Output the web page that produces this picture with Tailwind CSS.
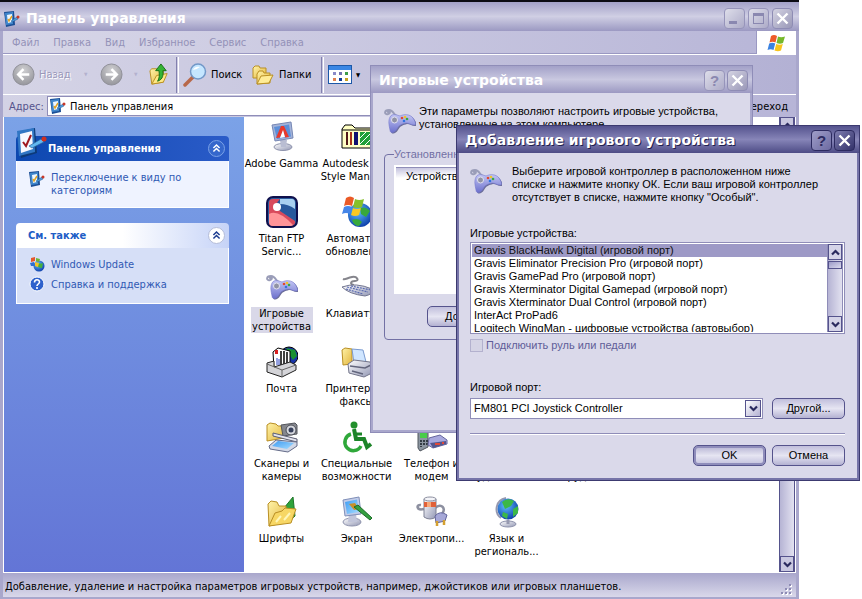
<!DOCTYPE html>
<html lang="ru">
<head>
  <meta charset="UTF-8" />
  <meta name="viewport" content="width=device-width, initial-scale=1.0" />
  <title>Панель управления</title>
  <script src="https://cdn.jsdelivr.net/npm/@tailwindcss/browser@4"></script>
</head>
<body class="relative h-screen overflow-hidden bg-white font-['DejaVu_Sans_Condensed','Noto_Sans',sans-serif] text-[11px] leading-[13px] text-black">

  <!-- Shared icons -->
  <svg class="absolute size-0" aria-hidden="true">
    <linearGradient id="pad" x1="0" y1="0" x2="0" y2="1"><stop offset="0" stop-color="#c3c6f4" /><stop offset="1" stop-color="#6c70cc" /></linearGradient>
    <linearGradient id="fold" x1="0" y1="0" x2="1" y2="1"><stop offset="0" stop-color="#fff3a8" /><stop offset="1" stop-color="#e2b53e" /></linearGradient>
    <linearGradient id="metal" x1="0" y1="0" x2="1" y2="1"><stop offset="0" stop-color="#ffffff" /><stop offset="1" stop-color="#9297b4" /></linearGradient>
    <linearGradient id="screen" x1="0" y1="0" x2="1" y2="1"><stop offset="0" stop-color="#3d9bf2" /><stop offset="1" stop-color="#a6dcff" /></linearGradient>
    <radialGradient id="globe" cx=".4" cy=".35" r=".7"><stop offset="0" stop-color="#5fc0ff" /><stop offset="1" stop-color="#0b3aa8" /></radialGradient>
    <radialGradient id="grey" cx=".5" cy=".3" r=".7"><stop offset="0" stop-color="#cfcfd2" /><stop offset="1" stop-color="#96969c" /></radialGradient>
    <symbol id="gamepad" viewBox="0 0 32 32">
      <path d="M13 11C9 10 10 5 5 5C0 5 0 10 4 9C7 8 6 6 3 7" fill="none" stroke="#9a9db8" stroke-width="2" />
      <path d="M6 12C8 8 13 10 16 11C20 9 26 9 29 13C31 16 33 20 30 20C27 20 25 18 22 18C18 19 15 20 13 24C11 28 6 29 6 25C5 20 4 16 6 12Z" fill="#6a6c96" transform="translate(1 1)" />
      <path d="M6 12C8 8 13 10 16 11C20 9 26 9 29 13C31 16 33 20 30 20C27 20 25 18 22 18C18 19 15 20 13 24C11 28 6 29 6 25C5 20 4 16 6 12Z" fill="url(#pad)" stroke="#7477cc" stroke-width=".6" />
      <circle cx="10.500" cy="15" r="3" fill="#9092a4" stroke="#e2e2f0" />
      <circle cx="18" cy="13" r="1.300" fill="#e04832" /><circle cx="21" cy="12" r="1.300" fill="#efc52c" /><circle cx="20" cy="16" r="1.300" fill="#2f74e0" /><circle cx="23" cy="14" r="1.300" fill="#38a845" />
    </symbol>
    <symbol id="panel" viewBox="0 0 32 32">
      <path d="M2 5L19 1L21 26L5 31Z" fill="#0d3a78" />
      <path d="M1 4L18 1L19 25L3 29Z" fill="#3076c4" />
      <path d="M4 7L16 4L17 22L5 26Z" fill="#f6f8ff" />
      <path d="M7 15L10 19L15 8" fill="none" stroke="#a01820" stroke-width="2" />
      <path d="M13 19L25 12L28 15L16 21Z" fill="#62b8f0" stroke="#28609c" stroke-width=".7" />
      <circle cx="28" cy="12" r="2.500" fill="#d03020" />
    </symbol>
    <symbol id="cp" viewBox="0 0 16 16">
      <path d="M0 1L10 0L11 14L2 16Z" fill="#1c4f96" />
      <path d="M1 2L9 1V13L2 14Z" fill="#3f86cc" />
      <path d="M3 4L8 3V11L4 12Z" fill="#eef7ff" />
      <path d="M4 8L5 10L8 5" fill="none" stroke="#e0a428" stroke-width="1.500" />
      <path d="M7 10L13 6L14 8L8 11Z" fill="#4aa2e4" stroke="#204e88" stroke-width=".5" />
      <circle cx="14" cy="6" r="1.500" fill="#c83828" />
    </symbol>
    <symbol id="flag" viewBox="0 0 20 20">
      <path d="M4 3Q7 1 10 3L8.500 9.500Q5.500 8 2.500 9.500Z" fill="#ee5a28" />
      <path d="M11 3.500Q14 5 18 3.500L16 10Q13 11.500 9.500 10Z" fill="#76b82a" />
      <path d="M2.200 10.500Q5.200 9 8.200 10.500L6.500 17Q3.500 15.500 .5 17Z" fill="#3b82e0" />
      <path d="M9.200 11Q12.500 12.500 15.800 11L14 17.500Q11 19 7.500 17.500Z" fill="#f8c41c" />
    </symbol>
    <symbol id="chevrons" viewBox="0 0 17 17">
      <path d="M5 8L8.500 4.500L12 8M5 12L8.500 8.500L12 12" fill="none" stroke="currentColor" stroke-width="1.700" />
    </symbol>
    <symbol id="down" viewBox="0 0 9 7"><path d="M1 1.500L4.500 5L8 1.500" fill="none" stroke="#2a2a5e" stroke-width="2.200" /></symbol>
    <symbol id="up" viewBox="0 0 9 7"><path d="M1 5.500L4.500 2L8 5.500" fill="none" stroke="#2a2a5e" stroke-width="2.200" /></symbol>
    <symbol id="close" viewBox="0 0 13 13"><path d="M1.500 1.500L11.500 11.500M11.500 1.500L1.500 11.500" stroke="#fff" stroke-width="2.400" /></symbol>
  </svg>

  <!-- Control panel window -->
  <main class="absolute top-0 right-[63px] bottom-0 left-0 flex flex-col border-t-2 border-[#0c0c14] bg-[#bdbbdb]">
    <header class="flex h-[29px] shrink-0 items-center gap-1 bg-linear-to-b from-[#a3a1c8] via-[#d0cfe4] to-[#9c99c2] pt-1 pr-1.5 pl-1">
      <svg class="size-4 shrink-0"><use href="#cp" /></svg>
      <h1 class="ml-0.5 flex-1 font-['DejaVu_Sans',sans-serif] text-[14px] font-bold text-white">Панель управления</h1>
      <div class="flex gap-[3px]">
        <button aria-label="Свернуть" class="flex size-[21px] items-end rounded border border-[#9694ba] bg-linear-to-br from-[#dedeea] to-[#adabc8] p-1"><span class="h-[3px] w-2 bg-[#8a88b0]"></span></button>
        <button aria-label="Развернуть" class="flex size-[21px] items-center justify-center rounded border border-[#9694ba] bg-linear-to-br from-[#dedeea] to-[#adabc8]"><span class="size-[11px] border border-t-[3px] border-[#8a88b0]"></span></button>
        <button aria-label="Закрыть" class="flex size-[21px] items-center justify-center rounded border border-[#8e8cb4] bg-linear-to-br from-[#d4d3e2] to-[#9a98b8]"><svg class="size-[13px]"><use href="#close" /></svg></button>
      </div>
    </header>

    <div class="flex min-h-0 flex-1 flex-col border-x-[3px] border-b-2 border-[#a9a7cc]">
      <!-- Menu bar -->
      <nav class="flex h-6 shrink-0 border-b border-white bg-linear-to-r from-[#d8d7e8] to-[#b7b5d7] text-[#9492b8]">
        <div class="flex flex-1 items-center gap-3.5 border-b border-[#9a98c2] pl-[9px]">
          <button>Файл</button>
          <button>Правка</button>
          <button>Вид</button>
          <button>Избранное</button>
          <button>Сервис</button>
          <button>Справка</button>
        </div>
        <div class="flex w-10 items-center justify-center border-l border-[#9a98c2] bg-white"><svg class="size-5"><use href="#flag" /></svg></div>
      </nav>

      <!-- Toolbar -->
      <div class="flex h-10 shrink-0 items-center border-b border-white bg-linear-to-r from-[#d5d4e6] to-[#b3b1d4] pl-[9px]">
        <button class="flex w-[68px] items-center gap-1 text-[#9a98ba] text-shadow-[1px_1px_0_#ffffff]">
          <svg class="size-[23px]" viewBox="0 0 24 24"><circle cx="12" cy="12" r="11" fill="url(#grey)" stroke="#8e8e96" /><path d="M18 12H7M12 6.500L6.500 12L12 17.500" fill="none" stroke="#fff" stroke-width="2.600" /></svg>
          Назад
        </button>
        <span class="w-5 pl-1 text-[5px] text-[#b3b1ce]">▼</span>
        <button aria-label="Вперед" class="w-8"><svg class="size-[23px]" viewBox="0 0 24 24"><circle cx="12" cy="12" r="11" fill="url(#grey)" stroke="#8e8e96" /><path d="M6 12H17M12 6.500L17.500 12L12 17.500" fill="none" stroke="#fff" stroke-width="2.600" /></svg></button>
        <span class="w-4 pl-0.5 text-[5px] text-[#b3b1ce]">▼</span>
        <button aria-label="Вверх" class="w-7">
          <svg class="size-[23px]" viewBox="0 0 24 24"><path d="M2 8L4 6H9L11 8L16 7V20L4 22Z" fill="url(#fold)" stroke="#b98f24" /><path d="M4 22L9 13L20 11L16 20Z" fill="#ffe985" stroke="#b98f24" /><path d="M10 19C16 17 16 12 15.500 8H19L13.500 1L8 8H11.500C12 13 12 16 10 19Z" fill="#34b434" stroke="#187018" /></svg>
        </button>
        <span class="h-9 w-[3px] border-r border-l border-r-white border-l-[#8280ae]"></span>
        <button class="flex w-[70px] items-center gap-1 pl-1">
          <svg class="size-6" viewBox="0 0 24 24"><path d="M10 14L2 22" stroke="#b8684a" stroke-width="3.500" stroke-linecap="round" /><circle cx="15" cy="8.500" r="7.500" fill="#c4e6ff" stroke="#7298c8" stroke-width="1.500" /><path d="M10 7Q12 3 17 4Q13 7 10 7Z" fill="#fff" /></svg>
          Поиск
        </button>
        <button class="flex w-[72px] items-center gap-1 pl-0.5">
          <svg class="size-6 shrink-0" viewBox="0 0 24 24"><path d="M2 5L4 3H8L9 5H15V15H2Z" fill="url(#fold)" stroke="#b98f24" /><path d="M6 11L8 8H12L13 10H19V20L6 21Z" fill="url(#fold)" stroke="#b98f24" /><path d="M6 21L10 13L22 12L18 20Z" fill="#ffec96" stroke="#b98f24" /></svg>
          Папки
        </button>
        <span class="h-9 w-[3px] border-r border-l border-r-white border-l-[#8280ae]"></span>
        <button aria-label="Вид значков" class="flex items-center gap-1 pl-1">
          <svg class="h-5 w-6" viewBox="0 0 24 20"><rect x=".5" y=".5" width="23" height="18" fill="#fff" stroke="#1d58a8" /><path d="M1 1H23V5H1Z" fill="#3a86e4" /><path d="M5 7H8V10H5Z" fill="#8a8ac8" /><path d="M11 7H14V10H11Z" fill="#7272b0" /><path d="M17 7H20V10H17Z" fill="#3c9c48" /><path d="M5 13H8V16H5Z" fill="#e08050" /><path d="M11 13H14V16H11Z" fill="#103c98" /><path d="M17 13H20V16H17Z" fill="#c8a020" /></svg>
          <span class="text-[6px]">▼</span>
        </button>
      </div>

      <!-- Address bar -->
      <div class="flex h-[22px] shrink-0 items-center bg-linear-to-r from-[#d3d2e5] to-[#b7b5d7] pr-2 pl-1.5 text-[#55538c]">
        <label for="address" class="w-[38px]">Адрес:</label>
        <div class="flex h-5 flex-1 items-center gap-1 border border-[#8f8db8] bg-white pl-0.5">
          <svg class="size-4"><use href="#cp" /></svg>
          <input id="address" type="text" value="Панель управления" class="flex-1 text-black outline-none" />
        </div>
        <button class="pl-3 text-black">Переход</button>
      </div>

      <div class="flex min-h-0 flex-1 border-b border-white bg-white px-px">
        <!-- Task pane -->
        <aside class="flex w-60 shrink-0 flex-col gap-[15px] bg-linear-to-b from-[#7ba2e7] to-[#6375d6] px-3 pt-[19px] pr-[15px] text-[#3059b4]">
          <section>
            <div class="flex h-[25px] items-center rounded-t bg-linear-to-r from-[#0c48b0] to-[#2a5bc8] pr-1 text-white">
              <svg class="-mt-3 size-8 shrink-0"><use href="#panel" /></svg>
              <h2 class="flex-1 font-bold">Панель управления</h2>
              <button aria-label="Свернуть раздел" class="rounded-full border border-[#7ba2e7] bg-[#3567cc]"><svg class="size-[15px]"><use href="#chevrons" /></svg></button>
            </div>
            <div class="flex h-[47px] gap-1.5 border border-t-0 border-white bg-[#eff3ff] px-3 pt-2.5">
              <svg class="size-4 shrink-0"><use href="#cp" /></svg>
              <a href="#">Переключение к виду по категориям</a>
            </div>
          </section>
          <section>
            <div class="flex h-[25px] items-center rounded-t bg-linear-to-r from-white from-50% to-[#c6d3f7] pr-1 pl-3">
              <h2 class="flex-1 font-bold text-[#215dc6]">См. также</h2>
              <button aria-label="Свернуть раздел" class="rounded-full border border-[#b4bcd8] bg-white text-[#1c3c90]"><svg class="size-[15px]"><use href="#chevrons" /></svg></button>
            </div>
            <div class="flex h-14 flex-col gap-1 border border-t-0 border-white bg-[#d6dff7] px-3 pt-2">
              <div class="flex items-center gap-1.5">
                <svg class="size-4" viewBox="0 0 16 16"><circle cx="10" cy="10" r="5.500" fill="url(#globe)" /><path d="M9 7Q12 8 14 7L13 12Q10 12 8 10Z" fill="#46b03c" /><path d="M2 2L6 1L6 5L2 6Z" fill="#e4572c" /><path d="M7 2L11 3L10 6L7 5Z" fill="#6db535" /><path d="M1 7L5 6L6 10L2 10Z" fill="#2f6fd0" /><path d="M6 6L10 7L9 11L6 10Z" fill="#f3c32b" /></svg>
                <a href="#">Windows Update</a>
              </div>
              <div class="flex items-center gap-1.5">
                <svg class="size-4" viewBox="0 0 16 16"><circle cx="8" cy="8" r="7" fill="#2f62cc" stroke="#fff" /><path d="M5.500 6.500C5.500 3 10.500 3 10.500 6C10.500 8 8 8 8 10M8 11V13" fill="none" stroke="#fff" stroke-width="1.600" /></svg>
                <a href="#">Справка и поддержка</a>
              </div>
            </div>
          </section>
        </aside>

        <!-- Icons -->
        <div class="flex flex-1 flex-col overflow-hidden pt-1 text-center">
          <div class="flex h-[75px] shrink-0">
            <div class="flex w-[75px] shrink-0 flex-col items-center gap-1">
              <svg class="size-8 shrink-0" viewBox="0 0 32 32"><ellipse cx="17" cy="26" rx="9" ry="3.500" fill="url(#metal)" stroke="#8d92ac" /><path d="M14 19H21L20 26H15Z" fill="#b9bdd2" /><path d="M6 4L25 1L27 17L9 20Z" fill="#a4b4da" stroke="#7687b4" /><path d="M8 6L23 3.500L25 15.500L11 18Z" fill="#5d8fd8" /><path d="M10 17L15 5H18L23 16L19 16.500L17 10L14 16.500Z" fill="#e8392c" /><path d="M14 17L17 9L19 16Z" fill="#fff" /></svg>
              <span>Adobe&nbsp;Gamma</span>
            </div>
            <div class="flex w-[75px] shrink-0 flex-col items-center gap-1">
              <svg class="size-8 shrink-0" viewBox="0 0 32 32"><path d="M1 27V8L4 4H11L14 7H31V27Z" fill="#ffffc4" stroke="#000" /><path d="M1 9H31" stroke="#000" /><path d="M6 11V24" stroke="#501818" stroke-width="2" /><path d="M10 11V24" stroke="#a83018" stroke-width="2" /><path d="M15 11V24" stroke="#101070" stroke-width="4" /><path d="M19 11H29V24H19Z" fill="#20a038" /><path d="M19 17L25 11M19 23L29 13M24 24L29 19" stroke="#fff" /></svg>
              <span>Autodesk Plot Style Manager</span>
            </div>
          </div>
          <div class="flex h-[75px] shrink-0">
            <div class="flex w-[75px] shrink-0 flex-col items-center gap-1">
              <svg class="size-8 shrink-0" viewBox="0 0 32 32"><rect x="1" y="1" width="30" height="30" rx="6" fill="#28599c" stroke="#10104c" stroke-width="2" /><path d="M3 7Q3 3 7 3H14Q8 8 14 15L29 25Q30 29 25 30H7Q3 30 3 26Z" fill="#d84a5c" /><path d="M3 18Q12 13 27 29L25 30H7Q3 30 3 26Z" fill="#ff9498" /><path d="M14 3H26Q29 3 29 7V13Q22 8 14 8Z" fill="#a8d0f0" /><circle cx="11" cy="11" r="4" fill="#fff" /></svg>
              <span>Titan FTP Servic...</span>
            </div>
            <div class="flex w-[75px] shrink-0 flex-col items-center gap-1">
              <svg class="size-8 shrink-0" viewBox="0 0 32 32"><circle cx="19" cy="19" r="12" fill="url(#globe)" /><path d="M19 12Q25 10 29 15L25 21L20 18ZM11 24Q17 21 21 26L18 30Q13 30 11 24Z" fill="#38a83c" /><path d="M5 2Q9 -1 13 2L11 10Q7 8 3 10Z" fill="#ea5a26" /><path d="M14 3Q18 5 23 3L21 11Q17 13 12 11Z" fill="#86c02a" /><path d="M3 11Q7 9 11 11L9 18Q5 16 1 18Z" fill="#4585e8" /><path d="M12 12Q16 14 20 12L18 19Q14 21 10 19Z" fill="#fac822" /></svg>
              <span>Автомати... обновление</span>
            </div>
          </div>
          <div class="flex h-[75px] shrink-0">
            <div class="flex w-[75px] shrink-0 flex-col items-center gap-1">
              <svg class="size-8 shrink-0"><use href="#gamepad" /></svg>
              <span class="w-[62px] bg-[#d9d8e8]">Игровые устройства</span>
            </div>
            <div class="flex w-[75px] shrink-0 flex-col items-center gap-1">
              <svg class="size-8 shrink-0" viewBox="0 0 32 32"><path d="M13 14C8 13 10 10 14 10C19 10 16 5 11 6C6 7 4 9 2 8" fill="none" stroke="#85858c" stroke-width="2" /><path d="M1 16Q15 11 31 18Q33 23 24 25Q8 23 1 16Z" fill="url(#metal)" stroke="#717590" /><path d="M6 16L27 21M5 18L22 23M10 15L30 19" stroke="#5a6ab0" stroke-width="1.200" stroke-dasharray="2 1" /></svg>
              <span>Клавиатура</span>
            </div>
          </div>
          <div class="flex h-[75px] shrink-0">
            <div class="flex w-[75px] shrink-0 flex-col items-center gap-1">
              <svg class="size-8 shrink-0" viewBox="0 0 32 32"><circle cx="23" cy="10" r="9" fill="#1734a8" stroke="#000" /><path d="M20 2L29 4L31 10L27 14L23 8Z" fill="#189030" /><path d="M7 6L12 2L24 5V23L8 23Z" fill="#fff" stroke="#000" /><path d="M15 5V22M18 5V22M21 6V22" stroke="#000" stroke-width="1.500" /><path d="M11 12V19M13 13V20" stroke="#2840c0" /><path d="M9 4H12V8H9Z" fill="#d82020" /><path d="M1 17L8 15V21L24 16L30 19V24L16 31L1 26Z" fill="#d4d4d8" stroke="#222" /><path d="M1 18L16 24V31M16 24L30 19" fill="none" stroke="#666" /></svg>
              <span>Почта</span>
            </div>
            <div class="flex w-[75px] shrink-0 flex-col items-center gap-1">
              <svg class="size-8 shrink-0" viewBox="0 0 32 32"><path d="M1 4L4 2L11 3V18L2 19Z" fill="url(#fold)" stroke="#b98f24" /><path d="M11 3L22 4L25 16L13 17Z" fill="#d0e6ff" stroke="#7b9bd0" /><path d="M7 18L13 14L29 16L31 21V27L23 31L8 27Z" fill="url(#metal)" stroke="#73758a" /><path d="M9 20L24 22L30 19M11 25L22 28" fill="none" stroke="#62657c" stroke-width="1.500" /></svg>
              <span>Принтеры&nbsp;и факсы</span>
            </div>
          </div>
          <div class="flex h-[75px] shrink-0">
            <div class="flex w-[75px] shrink-0 flex-col items-center gap-1">
              <svg class="size-8 shrink-0" viewBox="0 0 32 32"><path d="M1 4L4 2L10 3L12 5H18V17L1 20Z" fill="url(#fold)" stroke="#b98f24" /><path d="M15 4L29 2L31 4V13L17 15Z" fill="#85878e" stroke="#54565c" /><circle cx="25" cy="9" r="5" fill="#d6d8de" stroke="#4b4d55" /><circle cx="25" cy="9" r="2.500" fill="#38415c" /><path d="M7 12L31 18V21L7 15Z" fill="#e3e4ee" stroke="#5b5d72" /><path d="M3 25L10 19L31 21V25L22 31L4 28Z" fill="#d3d8e6" stroke="#646b88" /><path d="M6 25L12 20L28 22L21 28Z" fill="url(#screen)" /></svg>
              <span>Сканеры и камеры</span>
            </div>
            <div class="flex w-[75px] shrink-0 flex-col items-center gap-1">
              <svg class="size-8 shrink-0" viewBox="0 0 32 32"><circle cx="13" cy="4" r="3.500" fill="#23902c" /><path d="M13 8L15 18H23L26 26L30 23" fill="none" stroke="#1c8428" stroke-width="4" /><path d="M14 13H21" stroke="#1c8428" stroke-width="3" /><path d="M10 13A8.500 8.500 0 1 0 20 25" fill="none" stroke="#2fa83a" stroke-width="3.500" /></svg>
              <span>Специальные возможности</span>
            </div>
            <div class="flex w-[75px] shrink-0 flex-col items-center gap-1">
              <svg class="size-8 shrink-0" viewBox="0 0 32 32"><path d="M2 5L12 4V26L4 30L2 27Z" fill="#8b95a0" stroke="#50565e" /><path d="M4 11H11V17H4Z" fill="#48cc48" /><path d="M5 19V26M8 19V25M11 19V24" stroke="#333c44" stroke-dasharray="2 1" stroke-width="2" /><path d="M13 17L24 14L31 19V23L17 27L12 24Z" fill="#a9a9de" stroke="#65659c" /><path d="M14 22L30 20V23L17 27Z" fill="#55558c" /><path d="M19 23H24M26 22H28" stroke="#e04838" stroke-width="2" /></svg>
              <span>Телефон и модем</span>
            </div>
            <div class="flex w-[75px] shrink-0 flex-col items-center gap-1 pt-9">
              <span>Установка и удаление...</span>
            </div>
            <div class="flex w-[75px] shrink-0 flex-col items-center gap-1 pt-9">
              <span>Установка оборудова...</span>
            </div>
          </div>
          <div class="flex h-[75px] shrink-0">
            <div class="flex w-[75px] shrink-0 flex-col items-center gap-1">
              <svg class="size-8 shrink-0" viewBox="0 0 32 32"><path d="M18 12L27 1L29 20L21 27Z" fill="#2fa33b" stroke="#1d7528" /><path d="M2 8L5 5L11 6L13 10H20V26L3 30Z" fill="url(#fold)" stroke="#b98f24" /><path d="M3 30L9 17L16 15L19 12L30 13L25 27Z" fill="#f7d765" stroke="#b98f24" /><path d="M10 26L15 20M18 24L24 17" stroke="#fff6b8" stroke-width="2" /></svg>
              <span>Шрифты</span>
            </div>
            <div class="flex w-[75px] shrink-0 flex-col items-center gap-1">
              <svg class="size-8 shrink-0" viewBox="0 0 32 32"><ellipse cx="11" cy="26" rx="9" ry="4" fill="url(#metal)" stroke="#8d92ac" /><path d="M8 17H15L16 26H7Z" fill="#c1c5da" /><path d="M2 4L18 1L20 18L4 20Z" fill="#c3cce8" stroke="#7f8fb8" /><path d="M4 6L16 3.500L18 16L6 18Z" fill="url(#screen)" /><path d="M8 8L14 7L18 13L13 14Z" fill="#c8902a" /><path d="M13 11L17 9L31 22L29 24Z" fill="#34a040" stroke="#1c6a28" /></svg>
              <span>Экран</span>
            </div>
            <div class="flex w-[75px] shrink-0 flex-col items-center gap-1">
              <svg class="size-8 shrink-0" viewBox="0 0 32 32"><path d="M8 13C0 15 0 8 5 9M19 12C26 6 30 13 26 18" fill="none" stroke="#8d90a0" stroke-width="2.500" /><path d="M8 3V21Q14 25 20 21V3Z" fill="url(#metal)" stroke="#7d8094" /><path d="M8 6H20V11H8Z" fill="#e06038" /><path d="M11 6H15V11H11Z" fill="#f8a878" /><ellipse cx="14" cy="3" rx="6" ry="2" fill="#f4f4f8" stroke="#8d90a0" /><path d="M19 20Q24 14 31 19L29 25L20 27Z" fill="#a6a8d8" stroke="#62659c" /><path d="M21 25V30M28 24V29" stroke="#d4a030" stroke-width="2.500" /></svg>
              <span>Электропи...</span>
            </div>
            <div class="flex w-[75px] shrink-0 flex-col items-center gap-1">
              <svg class="size-8 shrink-0" viewBox="0 0 32 32"><ellipse cx="17" cy="28" rx="8" ry="3" fill="url(#metal)" stroke="#8d92ac" /><path d="M17 24V28" stroke="#9699b0" stroke-width="3" /><path d="M15 2C4 4 3 17 10 22" fill="none" stroke="#9699b0" stroke-width="2" /><circle cx="17" cy="13" r="10.500" fill="url(#globe)" /><path d="M11 6Q17 1 23 5L20 10L14 13ZM22 13L27 10V17L22 21ZM12 16L17 18L16 23L11 20Z" fill="#3cb848" /></svg>
              <span>Язык и региональ...</span>
            </div>
          </div>
        </div>

        <!-- Scrollbar -->
        <div class="flex w-4 shrink-0 flex-col justify-between border-x border-[#55538c] bg-linear-to-r from-[#b6b4d4] to-[#e2e1f0]">
          <button aria-label="Вверх" class="flex h-4 items-center justify-center border border-[#55538c] bg-[#c9c8e0]"><svg class="h-[7px] w-[9px]"><use href="#up" /></svg></button>
          <button aria-label="Вниз" class="flex h-4 items-center justify-center border border-[#55538c] bg-[#c9c8e0]"><svg class="h-[7px] w-[9px]"><use href="#down" /></svg></button>
        </div>
      </div>

      <!-- Status bar -->
      <footer class="flex h-6 shrink-0 items-center justify-between bg-linear-to-b from-[#a9a7cc] to-[#d9d8ea] pt-0.5 pl-0.5">
        <p>Добавление, удаление и настройка параметров игровых устройств, например, джойстиков или игровых планшетов.</p>
        <svg class="mt-2 mr-1 size-3" viewBox="0 0 12 12"><path d="M9 1H11M5 5H7M9 5H11M1 9H3M5 9H7M9 9H11" stroke="#fff" stroke-width="2" transform="translate(1 1)" /><path d="M9 1H11M5 5H7M9 5H11M1 9H3M5 9H7M9 9H11" stroke="#8d8bb4" stroke-width="2" /></svg>
      </footer>
    </div>
  </main>

  <!-- Game controllers dialog -->
  <section class="absolute top-[65px] left-[370px] flex h-[368px] w-[383px] flex-col border border-[#8f8db8] bg-[#a9a7cc] font-['Liberation_Sans',sans-serif]">
    <header class="flex h-[27px] shrink-0 items-center bg-linear-to-b from-[#a3a1c8] via-[#c9c8e0] to-[#9c99c2] pt-0.5 pr-1 pl-2">
      <h2 class="flex-1 font-['DejaVu_Sans',sans-serif] text-[14px] font-bold text-white">Игровые устройства</h2>
      <div class="flex gap-0.5">
        <button aria-label="Справка" class="size-[21px] rounded border border-[#9694ba] bg-linear-to-br from-[#dedeea] to-[#adabc8] text-[15px] font-bold text-[#8a88b0]">?</button>
        <button aria-label="Закрыть" class="flex size-[21px] items-center justify-center rounded border border-[#8e8cb4] bg-linear-to-br from-[#d4d3e2] to-[#9a98b8]"><svg class="size-[13px]"><use href="#close" /></svg></button>
      </div>
    </header>
    <div class="mx-0.5 mb-0.5 flex-1 bg-[#dad9ea] px-[11px] pt-3">
      <div class="flex h-[43px] gap-[3px]">
        <svg class="size-8 shrink-0"><use href="#gamepad" /></svg>
        <p>Эти параметры позволяют настроить игровые устройства, установленные на этом компьютере.</p>
      </div>
      <fieldset class="h-[192px] rounded border border-[#7270a4] px-[9px]">
        <legend class="text-[#7270a4]">Установленные игровые устройства</legend>
        <div class="mt-1 h-[129px] bg-white pt-0.5">
          <div class="ml-0.5 h-[18px] border-t border-[#8f8db8] bg-linear-to-br from-[#c4c2de] to-white to-30% pt-0.5 pl-2.5">Устройство</div>
        </div>
        <button class="mt-3 ml-[33px] h-[21px] w-[94px] rounded-[5px] border border-[#55538c] bg-linear-to-b from-[#c1bfdc] via-[#e6e5f2] to-[#b4b2d2]">Добавить...</button>
      </fieldset>
    </div>
  </section>

  <!-- Add controller dialog -->
  <section class="absolute top-[125px] left-[456px] flex w-[404px] flex-col border border-[#3c3a70] bg-[#7674a8] font-['Liberation_Sans',sans-serif]">
    <header class="flex h-[27px] shrink-0 items-center bg-linear-to-b from-[#55538e] via-[#8785b8] to-[#4e4c86] pt-0.5 pr-1 pl-2">
      <h2 class="flex-1 font-['DejaVu_Sans',sans-serif] text-[14px] font-bold text-white text-shadow-[1px_1px_0_#222250]">Добавление игрового устройства</h2>
      <div class="flex gap-0.5">
        <button aria-label="Справка" class="size-[21px] rounded border border-[#2c2a60] bg-linear-to-br from-[#9f9dc8] to-[#6d6ba2] text-[15px] font-bold text-[#2c2a60]">?</button>
        <button aria-label="Закрыть" class="flex size-[21px] items-center justify-center rounded border border-[#2c2a60] bg-linear-to-br from-[#7f7db0] to-[#34326a]"><svg class="size-[13px]"><use href="#close" /></svg></button>
      </div>
    </header>
    <form class="mx-0.5 mb-0.5 bg-[#dad9ea] pt-3 pr-3 pb-3 pl-[11px]">
      <div class="flex h-[62px] gap-[10px]">
        <svg class="size-8 shrink-0"><use href="#gamepad" /></svg>
        <p>Выберите игровой контроллер в расположенном ниже<br />списке и нажмите кнопку ОК. Если ваш игровой контроллер<br />отсутствует в списке, нажмите кнопку "Особый".</p>
      </div>
      <label for="devices">Игровые устройства:</label>
      <div class="mt-0.5 flex h-[92px] border border-[#8f8db8] bg-white p-px">
        <select id="devices" size="7" class="h-full min-w-0 flex-1 overflow-hidden leading-[13px] outline-none">
          <option selected class="h-[13px] min-h-0 bg-linear-to-r from-[#9d99c6] to-[#9d99c6] px-0.5 py-0">Gravis BlackHawk Digital (игровой порт)</option>
          <option class="h-[13px] min-h-0 px-0.5 py-0">Gravis Eliminator Precision Pro (игровой порт)</option>
          <option class="h-[13px] min-h-0 px-0.5 py-0">Gravis GamePad Pro (игровой порт)</option>
          <option class="h-[13px] min-h-0 px-0.5 py-0">Gravis Xterminator Digital Gamepad (игровой порт)</option>
          <option class="h-[13px] min-h-0 px-0.5 py-0">Gravis Xterminator Dual Control (игровой порт)</option>
          <option class="h-[13px] min-h-0 px-0.5 py-0">InterAct ProPad6</option>
          <option class="h-[13px] min-h-0 px-0.5 py-0">Logitech WingMan - цифровые устройства (автовыбор)</option>
        </select>
        <div class="flex w-4 flex-col border-x border-[#8f8db8] bg-linear-to-r from-[#b6b4d4] to-[#e2e1f0]">
          <button type="button" aria-label="Вверх" class="flex h-4 items-center justify-center border border-[#55538c] bg-[#d5d4e8]"><svg class="h-[7px] w-[9px]"><use href="#up" /></svg></button>
          <span class="mt-px h-2 border border-[#55538c] bg-linear-to-br from-[#9d9bc8] to-[#dcdbee]"></span>
          <button type="button" aria-label="Вниз" class="mt-auto flex h-4 items-center justify-center border border-[#55538c] bg-[#d5d4e8]"><svg class="h-[7px] w-[9px]"><use href="#down" /></svg></button>
        </div>
      </div>
      <label class="mt-[5px] flex items-center gap-[3px] text-[#5f5d98]">
        <input type="checkbox" disabled class="size-[13px] appearance-none border border-[#b3b1ce] bg-[#d5d4e5]" />
        Подключить руль или педали
      </label>
      <label for="port" class="mt-[29px] block">Игровой порт:</label>
      <div class="mt-1 flex items-center gap-[9px]">
        <div class="relative flex-1">
          <select id="port" class="block h-[21px] w-full appearance-none border border-[#8f8db8] bg-white pl-[3px] leading-[13px] outline-none">
            <option>FM801 PCI Joystick Controller</option>
          </select>
          <span class="pointer-events-none absolute top-0.5 right-0.5 flex h-[17px] w-4 items-center justify-center border border-[#55538c] bg-linear-to-br from-white to-[#b4b2d2]"><svg class="h-[7px] w-[9px]"><use href="#down" /></svg></span>
        </div>
        <button type="button" class="h-[21px] w-[73px] rounded-[5px] border border-[#55538c] bg-linear-to-b from-[#c1bfdc] via-[#e6e5f2] to-[#b4b2d2]">Другой...</button>
      </div>
      <hr class="mt-3.5 h-0.5 border-t border-b border-t-[#8f8db8] border-b-white" />
      <div class="mt-2.5 flex justify-end gap-1.5">
        <button type="button" class="h-[21px] w-[73px] rounded-[5px] border border-[#55538c] bg-linear-to-b from-[#b4b2d2] via-[#e6e5f2] to-[#c1bfdc] inset-ring-2 inset-ring-[#8f8dbb]">OK</button>
        <button type="button" class="h-[21px] w-[73px] rounded-[5px] border border-[#55538c] bg-linear-to-b from-[#c1bfdc] via-[#e6e5f2] to-[#b4b2d2]">Отмена</button>
      </div>
    </form>
  </section>

</body>
</html>
